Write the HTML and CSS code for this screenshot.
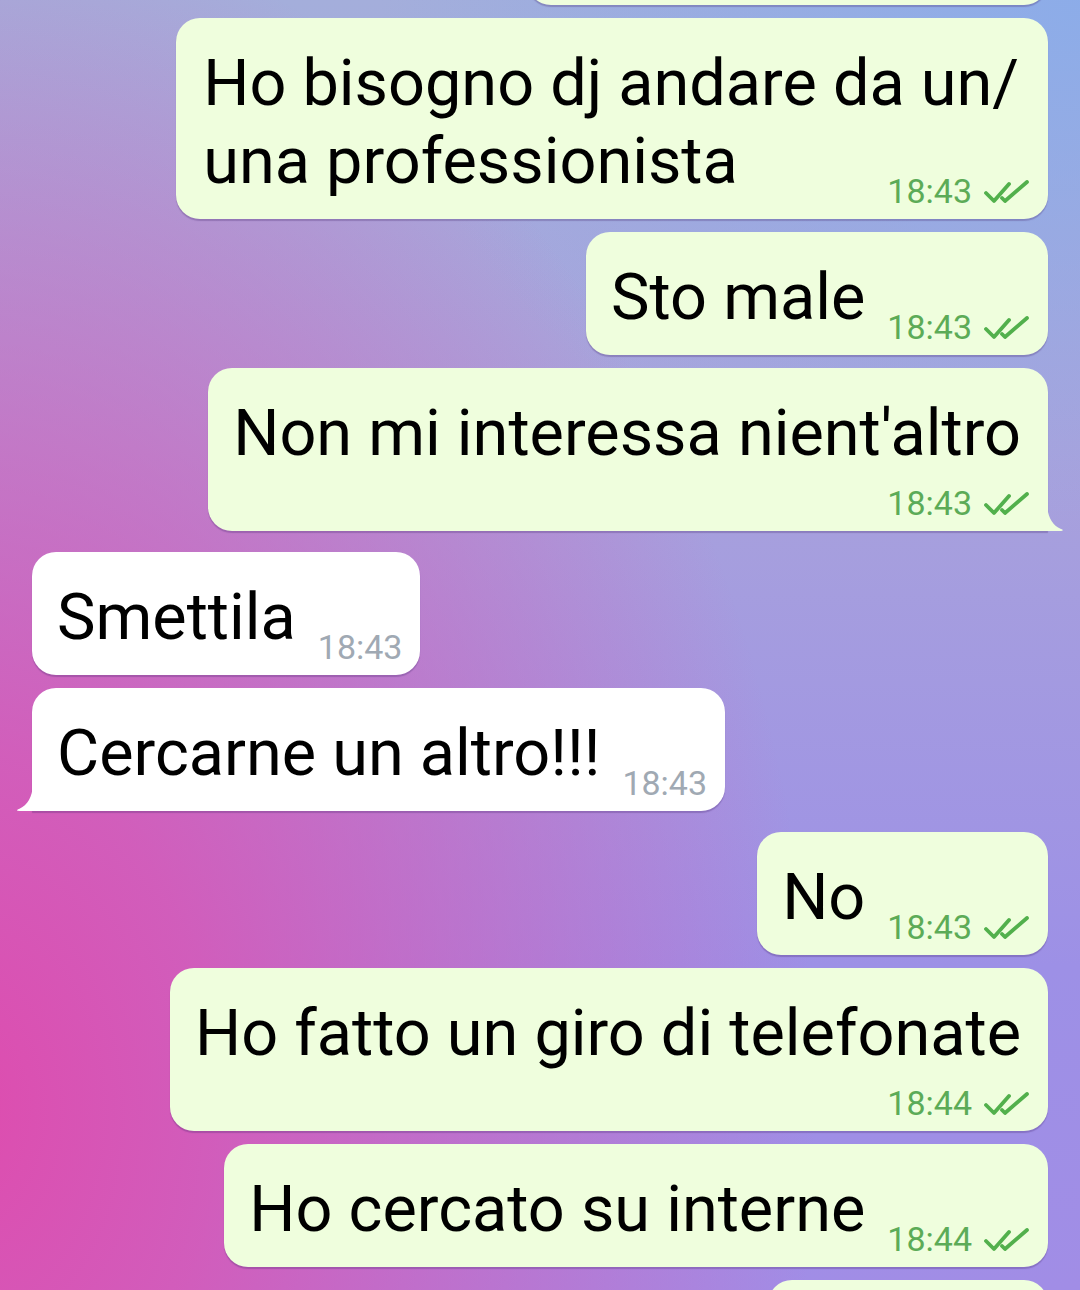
FILE: index.html
```html
<!DOCTYPE html>
<html lang="it">
<head>
  <meta charset="UTF-8" />
  <meta name="viewport" content="width=device-width, initial-scale=1.0"/>
  <title>Chat</title>
  <link rel="stylesheet" href="styles.css">
</head>
<body>

  <div class="chat">
    <div class="bubble out cut"></div>

    <div class="bubble out first">
      <div class="text">Ho bisogno dj andare da un/</div>
      <div class="row">
        <div class="text">una professionista</div>
        <span class="meta">18:43<svg class="ticks" viewBox="0 0 46 24"><path d="M2 13 L10 21 L25 4"/><path d="M18 18 L21 21 L43 2"/></svg></span>
      </div>
    </div>

    <div class="bubble out">
      <div class="row">
        <div class="text">Sto male</div>
        <span class="meta">18:43<svg class="ticks" viewBox="0 0 46 24"><path d="M2 13 L10 21 L25 4"/><path d="M18 18 L21 21 L43 2"/></svg></span>
      </div>
    </div>

    <div class="bubble out tail-out">
      <div class="text">Non mi interessa nient'altro</div>
      <span class="meta">18:43<svg class="ticks" viewBox="0 0 46 24"><path d="M2 13 L10 21 L25 4"/><path d="M18 18 L21 21 L43 2"/></svg></span>
      <svg class="tail" viewBox="0 0 17 26"><path d="M0 0 C1 12 5 20 14 24 C17 25 16 26 13 26 L0 26 Z"/></svg>
    </div>

    <div class="bubble in gap">
      <div class="row">
        <div class="text">Smettila</div>
        <span class="meta">18:43</span>
      </div>
    </div>

    <div class="bubble in tail-in">
      <div class="row">
        <div class="text">Cercarne un altro!!!</div>
        <span class="meta">18:43</span>
      </div>
      <svg class="tail" viewBox="0 0 17 26"><path d="M17 0 C16 12 12 20 3 24 C0 25 1 26 4 26 L17 26 Z"/></svg>
    </div>

    <div class="bubble out gap">
      <div class="row">
        <div class="text">No</div>
        <span class="meta">18:43<svg class="ticks" viewBox="0 0 46 24"><path d="M2 13 L10 21 L25 4"/><path d="M18 18 L21 21 L43 2"/></svg></span>
      </div>
    </div>

    <div class="bubble out">
      <div class="text">Ho fatto un giro di telefonate</div>
      <span class="meta">18:44<svg class="ticks" viewBox="0 0 46 24"><path d="M2 13 L10 21 L25 4"/><path d="M18 18 L21 21 L43 2"/></svg></span>
    </div>

    <div class="bubble out">
      <div class="row">
        <div class="text">Ho cercato su interne</div>
        <span class="meta">18:44<svg class="ticks" viewBox="0 0 46 24"><path d="M2 13 L10 21 L25 4"/><path d="M18 18 L21 21 L43 2"/></svg></span>
      </div>
    </div>

    <div class="bubble out cut-bottom"></div>
  </div>

</body>
</html>
```

FILE: styles.css
```css
* { box-sizing: border-box; margin: 0; padding: 0; }

body {
  font-family: Roboto, 'Noto Sans', sans-serif;
  height: 1290px;
  overflow: hidden;
  background:
    radial-gradient(ellipse 860px 1200px at -4% 86%, rgba(222, 76, 174, 1) 0%, rgba(218, 84, 180, 0.85) 30%, rgba(210, 100, 196, 0) 100%),
    radial-gradient(ellipse 700px 520px at 100% 0%, rgba(138, 172, 234, 0.9) 0%, rgba(138, 172, 234, 0) 100%),
    linear-gradient(180deg, #a4aedb 0%, #a8a2dc 35%, #9d90e6 75%, #a18de6 100%);
}

.chat {
  display: flex;
  flex-direction: column;
  padding: 0 32px;
}

.bubble {
  position: relative;
  display: flex;
  flex-direction: column;
  padding: 26px 27px 19px 25px;
  margin-top: 13px;
  border-radius: 24px;
  box-shadow: 0 2px 1px rgba(70, 40, 110, 0.28);
}

.bubble.first { padding-left: 27px; }
.bubble.gap { margin-top: 21px; }

.out { align-self: flex-end; background-color: #effedd; }
.in { align-self: flex-start; background-color: #fff; }

/* pezzi tagliati sopra e sotto */
.cut { width: 521px; height: 110px; margin-top: -105px; }
.cut-bottom { width: 280px; height: 110px; }

.text {
  font-size: 64.8px;
  line-height: 78px;
  color: #000;
  white-space: nowrap;
}

.first .text { padding-right: 2px; }

.row {
  display: flex;
  align-items: flex-end;
  justify-content: space-between;
}

.meta {
  display: flex;
  align-items: center;
  align-self: flex-end;
  margin: 13px -9px -9px 0;
  padding-left: 22px;
  font-size: 34px;
  line-height: 36px;
  white-space: nowrap;
}

.out .meta { color: #5cab57; }
.in .meta { color: #a0a9b3; }

.ticks {
  width: 46px;
  height: 24px;
  margin-left: 12px;
  margin-top: 2px;
  fill: none;
  stroke: #52b04c;
  stroke-width: 3.8;
  stroke-linecap: round;
  stroke-linejoin: round;
}

.tail {
  position: absolute;
  bottom: 0;
  width: 17px;
  height: 26px;
}

.tail-out { border-bottom-right-radius: 0; }
.tail-out .tail { right: -16px; fill: #effedd; }

.tail-in { border-bottom-left-radius: 0; }
.tail-in .tail { left: -16px; fill: #fff; }
```
